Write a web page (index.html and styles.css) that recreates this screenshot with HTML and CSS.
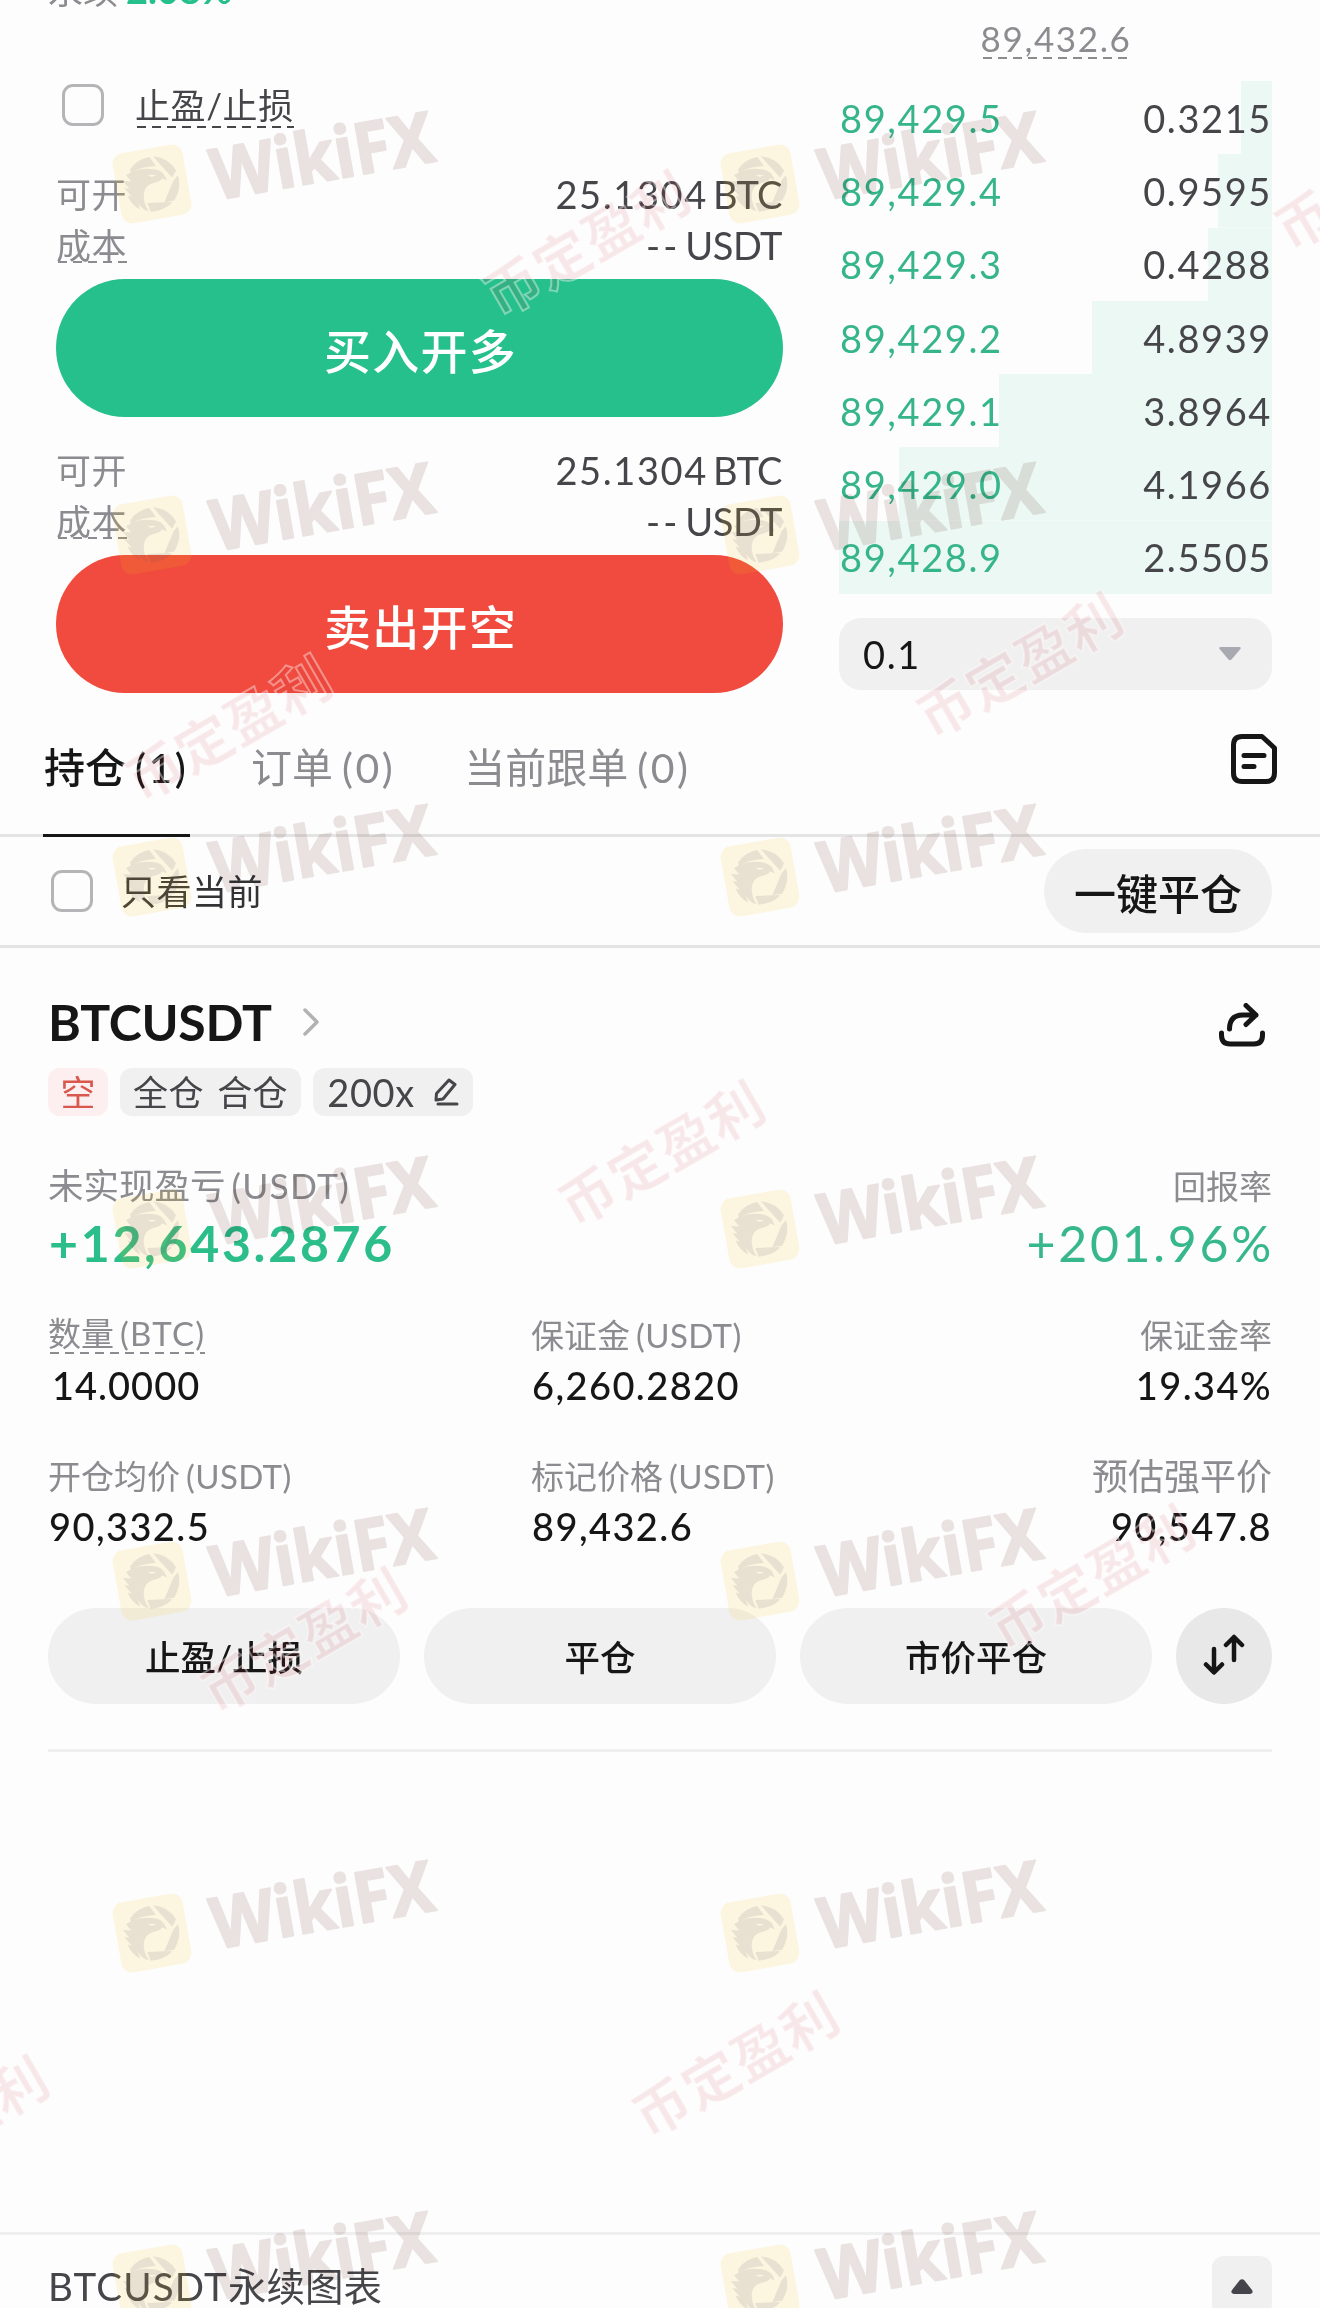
FILE: index.html
```html
<!DOCTYPE html>
<html lang="zh-CN">
<head>
  <meta charset="UTF-8" />
  <meta name="viewport" content="width=device-width, initial-scale=1.0"/>
  <title>BTCUSDT永续</title>
  <link rel="stylesheet" href="styles.css">
</head>
<body>
  <section class="trade">
    <div class="order-form">
      <div class="funding">永续 <b class="rate">2.08%</b></div>
      <label class="check-row">
        <span class="checkbox"></span>
        <span class="dashed">止盈/止损</span>
      </label>

      <div class="info-row first"><span>可开</span><span class="info-val">25.1304<i>BTC</i></span></div>
      <div class="info-row"><span class="cost">成本</span><span class="info-val usdt">--<i>USDT</i></span></div>
      <button class="order-btn buy">买入开多</button>

      <div class="info-row second"><span>可开</span><span class="info-val">25.1304<i>BTC</i></span></div>
      <div class="info-row"><span class="cost">成本</span><span class="info-val usdt">--<i>USDT</i></span></div>
      <button class="order-btn sell">卖出开空</button>
    </div>

    <div class="order-book">
      <div class="mark-price"><span class="dashed">89,432.6</span></div>
      <div class="book-row" style="--depth: 31px"><span class="price">89,429.5</span><span>0.3215</span></div>
      <div class="book-row" style="--depth: 54px"><span class="price">89,429.4</span><span>0.9595</span></div>
      <div class="book-row" style="--depth: 64px"><span class="price">89,429.3</span><span>0.4288</span></div>
      <div class="book-row" style="--depth: 180px"><span class="price">89,429.2</span><span>4.8939</span></div>
      <div class="book-row" style="--depth: 273px"><span class="price">89,429.1</span><span>3.8964</span></div>
      <div class="book-row" style="--depth: 373px"><span class="price">89,429.0</span><span>4.1966</span></div>
      <div class="book-row" style="--depth: 433px"><span class="price">89,428.9</span><span>2.5505</span></div>
      <div class="step-select">
        <span>0.1</span>
        <svg width="22" height="14" viewBox="0 0 22 14"><path d="M2 0h18q3 0 1 2.500l-8.500 10q-1.500 1.500-3 0L1 2.500Q-1 0 2 0z" fill="#a9a9b2"/></svg>
      </div>
    </div>
  </section>

  <nav class="tabs">
    <div class="tab active">持仓<span>(1)</span></div>
    <div class="tab">订单<span>(0)</span></div>
    <div class="tab">当前跟单<span>(0)</span></div>
    <svg class="history-icon" width="46" height="50" viewBox="0 0 46 50" fill="none" stroke="#161616" stroke-width="5" stroke-linecap="round" stroke-linejoin="round">
      <path d="M11 2.500H31L43.500 14V39Q43.500 47.500 35 47.500H11Q2.500 47.500 2.500 39V11Q2.500 2.500 11 2.500z"/>
      <path d="M13 21.500H33M13 32.500H23"/>
    </svg>
  </nav>

  <div class="filter-bar">
    <label class="check-row">
      <span class="checkbox"></span>
      <span>只看当前</span>
    </label>
    <button class="close-all">一键平仓</button>
  </div>

  <main class="position">
    <div class="title-row">
      <h1>BTCUSDT</h1>
      <svg class="chevron" width="18" height="30" viewBox="0 0 18 30" fill="none" stroke="#b2b2b4" stroke-width="3.5" stroke-linecap="round" stroke-linejoin="round"><path d="M3 3L15 15L3 27"/></svg>
      <svg class="share-icon" width="46" height="44" viewBox="0 0 46 44" fill="none" stroke="#161616" stroke-width="5" stroke-linecap="round" stroke-linejoin="round">
        <path d="M2.500 30V32Q2.500 41 11 41H35Q43.500 41 43.500 32V30"/>
        <path d="M10.500 26Q10.500 12 24 12H37M27 2.500L37 12L27 21.500"/>
      </svg>
    </div>

    <div class="badges">
      <span class="badge short">空</span>
      <span class="badge mode">全仓 合仓</span>
      <span class="badge lever">200x
        <svg width="26" height="28" viewBox="0 0 26 28" fill="none" stroke="#46464a" stroke-width="3" stroke-linejoin="round" stroke-linecap="round">
          <path d="M16 2L22 6.500L10 21L3 22L3.500 15.500z"/><path d="M5 26H24"/>
        </svg>
      </span>
    </div>

    <div class="pnl">
      <div>
        <p class="label">未实现盈亏<span>(USDT)</span></p>
        <p class="big profit">+12,643.2876</p>
      </div>
      <div class="right">
        <p class="label">回报率</p>
        <p class="big">+201.96%</p>
      </div>
    </div>

    <div class="stats">
      <div><p class="label"><span class="dashed">数量<span>(BTC)</span></span></p><p class="value qty">14.0000</p></div>
      <div><p class="label">保证金<span>(USDT)</span></p><p class="value">6,260.2820</p></div>
      <div class="right"><p class="label">保证金率</p><p class="value">19.34%</p></div>
      <div><p class="label">开仓均价<span>(USDT)</span></p><p class="value">90,332.5</p></div>
      <div><p class="label">标记价格<span>(USDT)</span></p><p class="value">89,432.6</p></div>
      <div class="right"><p class="label wide">预估强平价</p><p class="value">90,547.8</p></div>
    </div>

    <div class="actions">
      <button>止盈/止损</button>
      <button>平仓</button>
      <button>市价平仓</button>
      <button class="reverse">
        <svg width="42" height="42" viewBox="0 0 42 42" fill="none" stroke="#161616" stroke-width="4.500" stroke-linecap="round" stroke-linejoin="round">
          <path d="M11 15V38M3 30.500L11 38.500L19 30.500"/>
          <path d="M31 26V3M23 11L31 3L39 11"/>
        </svg>
      </button>
    </div>
  </main>

  <footer class="chart-bar">
    <span><span class="pair">BTCUSDT</span>永续图表</span>
    <button class="expand">
      <svg width="22" height="15" viewBox="0 0 22 15"><path d="M3 15Q-1 14.500 1 11L8.500 1.500Q11-1.200 13.500 1.500L21 11Q23 14.500 19 15z" fill="#44444a"/></svg>
    </button>
  </footer>

  <!-- watermark layer -->
  <svg class="watermark" width="1320" height="2308" viewBox="0 0 1320 2308">
    <defs>
      <g id="wikifx">
        <g transform="rotate(-10)">
          <rect x="-35.500" y="-35.500" width="71" height="71" rx="11" fill="#f5c518" fill-opacity=".13"/>
          <g fill="#5a4a6a" fill-opacity=".12">
            <path d="M-19-18Q-11-27 2-27L7-17Q-6-19-19-15z"/>
            <path d="M6-27Q21-23 26-9L21-3L10-20z"/>
            <path d="M27-4Q29 9 19 20H9L22 0z"/>
            <path d="M16 22Q8 28-6 27L-8 18L16 21z"/>
            <path d="M-24-13Q-12-19 1-15Q14-13 15-1L11-4Q9-1 2-1Q-8 0-10 9Q-12 18-8 26Q-14 24-17 16L-16 23Q-24 17-26 7L-22 9L-28-1L-23 1L-28-8L-20-6zM-3-10L1-7L6-8z" fill-rule="evenodd"/>
          </g>
          <text x="60" y="27" class="wm-brand" textLength="225" lengthAdjust="spacingAndGlyphs">WikiFX</text>
        </g>
      </g>
      <g id="profit">
        <text class="wm-profit" transform="rotate(-30)" x="0" y="20" text-anchor="middle" textLength="226">币定盈利</text>
      </g>
    </defs>
    <use href="#wikifx" x="152" y="184"/>
    <use href="#wikifx" x="760" y="184"/>
    <use href="#wikifx" x="152" y="535"/>
    <use href="#wikifx" x="760" y="535"/>
    <use href="#wikifx" x="152" y="877"/>
    <use href="#wikifx" x="760" y="877"/>
    <use href="#wikifx" x="152" y="1229"/>
    <use href="#wikifx" x="760" y="1229"/>
    <use href="#wikifx" x="152" y="1581"/>
    <use href="#wikifx" x="760" y="1581"/>
    <use href="#wikifx" x="152" y="1933"/>
    <use href="#wikifx" x="760" y="1933"/>
    <use href="#wikifx" x="152" y="2284"/>
    <use href="#wikifx" x="760" y="2284"/>

    <use href="#profit" x="587" y="245"/>
    <use href="#profit" x="1378" y="179"/>
    <use href="#profit" x="229" y="730"/>
    <use href="#profit" x="1020" y="667"/>
    <use href="#profit" x="662" y="1155"/>
    <use href="#profit" x="304" y="1642"/>
    <use href="#profit" x="1092" y="1579"/>
    <use href="#profit" x="736" y="2066"/>
    <use href="#profit" x="-54" y="2130"/>
  </svg>
</body>
</html>
```

FILE: styles.css
```css
:root {
  --bg: #fdfdfd;
  --text: #161616;
  --text-mid: #46464a;
  --text-gray: #8b8b90;
  --line: #e4e4e4;
  --fill: #f0f0f0;
  --green: #25c08b;
  --red: #f04b3e;
}

* {
  box-sizing: border-box;
}

body {
  margin: 0;
  position: relative;
  width: 1320px;
  height: 2308px;
  overflow: hidden;
  display: flex;
  flex-direction: column;
  background: var(--bg);
  color: var(--text);
  font-family: Lato, "Noto Sans CJK SC", sans-serif;
  font-size: 35px;
}

h1, p {
  margin: 0;
}

button {
  border: none;
  padding: 0;
  font-family: inherit;
  color: inherit;
}

svg {
  display: block;
  flex: none;
}

.dashed, .cost {
  background: repeating-linear-gradient(90deg, currentColor 0 9px, transparent 9px 15px) 2px 100% / 100% 2px no-repeat;
}

/* order form */
.trade {
  display: flex;
  justify-content: space-between;
  height: 693px;
  padding: 0 48px 0 56px;
}

.order-form {
  width: 727px;
}

.funding {
  height: 40px;
  margin: -31px 0 75px -8px;
  line-height: 40px;
  color: var(--text-gray);
}

.rate {
  color: var(--green);
  font-size: 38px;
  margin-left: -1px;
}

.check-row {
  display: flex;
  align-items: center;
  height: 42px;
  color: var(--text-mid);
}

.checkbox {
  width: 42px;
  height: 42px;
  border: 3px solid #b5b5b8;
  border-radius: 11px;
}

.order-form .check-row {
  padding-left: 6px;
  gap: 31px;
}

.order-form .check-row .dashed {
  line-height: 46px;
  letter-spacing: 0.6px;
}

.info-row {
  display: flex;
  justify-content: space-between;
  align-items: center;
  height: 51px;
  padding-bottom: 3px;
  line-height: 36px;
  color: var(--text-gray);
  letter-spacing: 0.5px;
}

.info-row.first {
  margin-top: 44px;
}

.info-row.second {
  margin-top: 29px;
}

.info-val {
  padding-right: 1px;
  color: var(--text-mid);
  font-size: 38px;
  letter-spacing: 1.6px;
}

.info-val.usdt {
  letter-spacing: 3px;
}

.info-val i {
  font-style: normal;
  margin-left: 5px;
  letter-spacing: -0.5px;
}

.order-btn {
  display: block;
  width: 727px;
  height: 138px;
  margin-top: 7px;
  padding-left: 2px;
  border-radius: 69px;
  color: #fff;
  font-size: 47px;
  font-weight: 500;
  letter-spacing: 1.3px;
}

.buy {
  background: var(--green);
}

.sell {
  background: var(--red);
}

/* order book */
.order-book {
  width: 433px;
  font-size: 38px;
  letter-spacing: 1.6px;
}

.mark-price {
  height: 81px;
  padding: 17px 0 0 1px;
  text-align: center;
  font-size: 35px;
  line-height: 42px;
  color: var(--text-gray);
}

.mark-price .dashed {
  display: inline-block;
}

.book-row {
  display: flex;
  justify-content: space-between;
  align-items: center;
  height: 73.3px;
  padding-left: 1px;
  color: var(--text-mid);
  background: linear-gradient(#ebf8f3, #ebf8f3) right / var(--depth) 100% no-repeat;
}

.price {
  color: #36b58b;
}

.step-select {
  display: flex;
  justify-content: space-between;
  align-items: center;
  height: 72px;
  margin-top: 24px;
  padding: 0 31px 0 24px;
  border-radius: 22px;
  background: var(--fill);
}

/* tabs */
.tabs {
  display: flex;
  height: 144px;
  padding: 0 43px;
  border-bottom: 3px solid var(--line);
}

.tab {
  height: 144px;
  margin-right: 69px;
  line-height: 150px;
  font-size: 41px;
  color: var(--text-gray);
}

.tab span {
  margin-left: 9px;
  letter-spacing: 2.5px;
}

.tab.active {
  width: 147px;
  margin-right: 61px;
  padding-left: 1px;
  border-bottom: 3px solid var(--text);
  color: var(--text);
  font-weight: 500;
}

.history-icon {
  margin: 41px 0 0 auto;
}

/* filter bar */
.filter-bar {
  display: flex;
  justify-content: space-between;
  align-items: center;
  height: 111px;
  padding: 0 48px 0 51px;
  border-bottom: 3px solid var(--line);
}

.filter-bar .check-row {
  gap: 28px;
  color: #333336;
  line-height: 40px;
  letter-spacing: 0.5px;
}

.close-all {
  width: 228px;
  height: 84px;
  border-radius: 42px;
  background: var(--fill);
  font-size: 42px;
  font-weight: 500;
}

/* position card */
.position {
  margin: 0 48px;
  padding-top: 44px;
  border-bottom: 3px solid #efefef;
  height: 804px;
}

.title-row {
  display: flex;
  align-items: center;
  height: 60px;
}

.title-row h1 {
  font-size: 50px;
  font-weight: 700;
  line-height: 60px;
  letter-spacing: -0.3px;
}

.chevron {
  margin-left: 30px;
}

.share-icon {
  margin: 5px 7px 0 auto;
}

.badges {
  display: flex;
  gap: 12px;
  margin-top: 16px;
}

.badge {
  display: flex;
  align-items: center;
  justify-content: center;
  height: 48px;
  border-radius: 12px;
  background: var(--fill);
  color: var(--text-mid);
  line-height: 48px;
}

.short {
  width: 60px;
  background: #fdeef0;
  color: #d9584d;
}

.mode {
  width: 181px;
  word-spacing: 4px;
  letter-spacing: 0.4px;
}

.lever {
  width: 160px;
  gap: 18px;
  font-size: 38px;
  letter-spacing: 0.6px;
}

.pnl {
  display: flex;
  justify-content: space-between;
  margin-top: 48px;
}

.right {
  text-align: right;
}

.label {
  height: 44px;
  line-height: 44px;
  font-size: 33px;
  color: var(--text-gray);
}

.label span span, .label > span:not(.dashed) {
  margin-left: 6px;
  letter-spacing: 0.4px;
}

.label .dashed > span {
  letter-spacing: 1.3px;
}

.label.wide {
  font-size: 36px;
}

.pnl .label {
  font-size: 35.5px;
}

.pnl .label > span {
  letter-spacing: 1.2px;
}

.pnl .right .label {
  font-size: 33px;
}

.big {
  height: 60px;
  margin-top: 5px;
  line-height: 60px;
  font-size: 50px;
  color: #36b78c;
  letter-spacing: 2.7px;
}

.pnl .right .big {
  margin-right: -2px;
}

.big.profit {
  color: #2bbd8a;
  font-weight: 700;
  padding-left: 1px;
  letter-spacing: 2.7px;
}

.stats {
  display: grid;
  grid-template-columns: 483px 400px 1fr;
  row-gap: 43px;
  margin-top: 40px;
}

.stats .dashed {
  display: inline-block;
  height: 41px;
  line-height: 40px;
  vertical-align: top;
}

.value {
  height: 48px;
  margin-top: 6px;
  padding-left: 1px;
  line-height: 45px;
  font-size: 38px;
  font-weight: 500;
  letter-spacing: 1.4px;
}

.value.qty {
  padding-left: 4px;
  letter-spacing: 1px;
}

.actions {
  display: flex;
  gap: 24px;
  margin-top: 56px;
}

.actions button {
  width: 352px;
  height: 96px;
  padding-bottom: 2px;
  border-radius: 48px;
  background: var(--fill);
  font-size: 35.5px;
  font-weight: 500;
}

.actions .reverse {
  display: flex;
  align-items: center;
  justify-content: center;
  width: 96px;
  background: #e8e8e8;
}

/* chart bar */
.chart-bar {
  display: flex;
  justify-content: space-between;
  margin-top: auto;
  height: 76px;
  padding: 21px 48px 0;
  border-top: 3px solid #efefef;
  font-size: 38.5px;
  line-height: 61px;
  color: var(--text-mid);
}

.pair {
  letter-spacing: 1.2px;
}

.expand {
  display: flex;
  justify-content: center;
  width: 60px;
  height: 60px;
  padding-top: 23px;
  border-radius: 12px;
  background: var(--fill);
}

/* watermark */
.watermark {
  position: absolute;
  left: 0;
  top: 0;
  pointer-events: none;
}

.wm-brand {
  font-family: "Noto Sans", sans-serif;
  font-weight: 700;
  font-size: 71px;
  fill: #ebe4e3;
  stroke: #ebe4e3;
  stroke-width: 2px;
  stroke-linejoin: round;
  mix-blend-mode: multiply;
}

.wm-profit {
  font-family: "Noto Sans CJK SC", sans-serif;
  font-weight: 700;
  font-size: 56px;
  fill: rgba(200, 40, 60, 0.1);
  stroke: rgba(255, 255, 255, 0.4);
  stroke-width: 2px;
}
```
